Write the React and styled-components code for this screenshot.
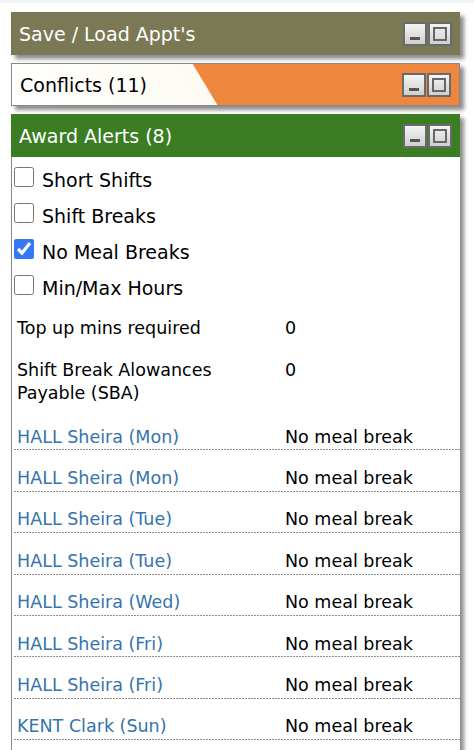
import React from "react";
import styled, { createGlobalStyle } from "styled-components";

const GlobalStyle = createGlobalStyle`
  body {
    margin: 0;
    background: #fff;
    font-family: "DejaVu Sans", Verdana, sans-serif;
  }
`;

const TopStrip = styled.div`
  height: 3px;
  background: #f3f4f7;
`;

const Page = styled.div`
  display: flex;
  flex-direction: column;
  gap: 8px;
  padding: 9px 14px 0 11px;
`;

const Panel = styled.div`
  box-shadow: 4px 4px 4px rgba(0, 0, 0, 0.45);
`;

const Header = styled.div`
  display: flex;
  align-items: center;
  justify-content: space-between;
  height: 43px;
  box-sizing: border-box;
  padding: 0 8px 0 8px;
  color: ${(p) => (p.$dark ? "#000" : "#fff")};
  background: ${(p) => p.$bg};
  border: ${(p) => (p.$border ? "1px solid #888" : "none")};
  font-size: 19px;
  span {
    padding-top: 1px;
  }
`;

const Buttons = styled.div`
  display: flex;
  gap: 1px;
`;

const WinButton = styled.div`
  width: 24px;
  height: 24px;
  box-sizing: border-box;
  border: 2px solid #6a6a6a;
  background: linear-gradient(#f4f4f4, #cfcfcf);
  display: flex;
  align-items: ${(p) => (p.$min ? "flex-end" : "center")};
  justify-content: center;
  &::after {
    content: "";
    display: block;
    box-sizing: border-box;
    ${(p) =>
      p.$min
        ? "width: 10px; height: 3px; background: #555; margin-bottom: 4px;"
        : "width: 14px; height: 14px; border: 2px solid #666;"}
  }
`;

const Body = styled.div`
  background: #fff;
  border-left: 1px solid #888;
  padding: 5px 0 10px 2px;
`;

const CheckRow = styled.label`
  display: flex;
  align-items: center;
  height: 36px;
  font-size: 19px;
  color: #000;
  input {
    width: 20px;
    height: 20px;
    margin: 0 8px 6px 0;
    accent-color: #3478f6;
  }
`;

const StatGrid = styled.div`
  display: grid;
  grid-template-columns: 268px 1fr;
  row-gap: 19px;
  padding: 11px 0 0 3px;
  font-size: 17.5px;
  line-height: 23px;
  margin-bottom: 4px;
`;

const AlertRow = styled.div`
  display: grid;
  grid-template-columns: 268px 1fr;
  align-items: center;
  height: 41.4px;
  box-sizing: border-box;
  padding: 14px 0 0 3px;
  background-image: repeating-linear-gradient(
    to right,
    #8e8e8e 0 2px,
    transparent 2px 3px
  );
  background-size: 100% 1px;
  background-position: left bottom;
  background-repeat: no-repeat;
  font-size: 17.5px;
`;

const Name = styled.span`
  color: #3574ad;
`;

const Panels = () => (
  <Buttons>
    <WinButton $min />
    <WinButton />
  </Buttons>
);

const alerts = [
  ["HALL Sheira (Mon)", "No meal break"],
  ["HALL Sheira (Mon)", "No meal break"],
  ["HALL Sheira (Tue)", "No meal break"],
  ["HALL Sheira (Tue)", "No meal break"],
  ["HALL Sheira (Wed)", "No meal break"],
  ["HALL Sheira (Fri)", "No meal break"],
  ["HALL Sheira (Fri)", "No meal break"],
  ["KENT Clark (Sun)", "No meal break"],
];

const checks = [
  ["Short Shifts", false],
  ["Shift Breaks", false],
  ["No Meal Breaks", true],
  ["Min/Max Hours", false],
];

export default function App() {
  return (
    <>
      <GlobalStyle />
      <TopStrip />
      <Page>
        <Panel>
          <Header $bg="#7a7855">
            <span>Save / Load Appt's</span>
            <Panels />
          </Header>
        </Panel>
        <Panel>
          <Header
            $dark
            $border
            $bg="linear-gradient(59deg, #fff 0%, #fdfbf2 43.4%, #ef863e 43.7%, #ef863e 100%)"
          >
            <span>Conflicts (11)</span>
            <Panels />
          </Header>
        </Panel>
        <Panel>
          <Header $bg="#3a7d23">
            <span>Award Alerts (8)</span>
            <Panels />
          </Header>
          <Body>
            {checks.map(([label, on]) => (
              <CheckRow key={label}>
                <input type="checkbox" defaultChecked={on} />
                {label}
              </CheckRow>
            ))}
            <StatGrid>
              <span>Top up mins required</span>
              <span>0</span>
              <span>
                Shift Break Alowances
                <br />
                Payable (SBA)
              </span>
              <span>0</span>
            </StatGrid>
            {alerts.map(([n, v], i) => (
              <AlertRow key={i}>
                <Name>{n}</Name>
                <span>{v}</span>
              </AlertRow>
            ))}
          </Body>
        </Panel>
      </Page>
    </>
  );
}
